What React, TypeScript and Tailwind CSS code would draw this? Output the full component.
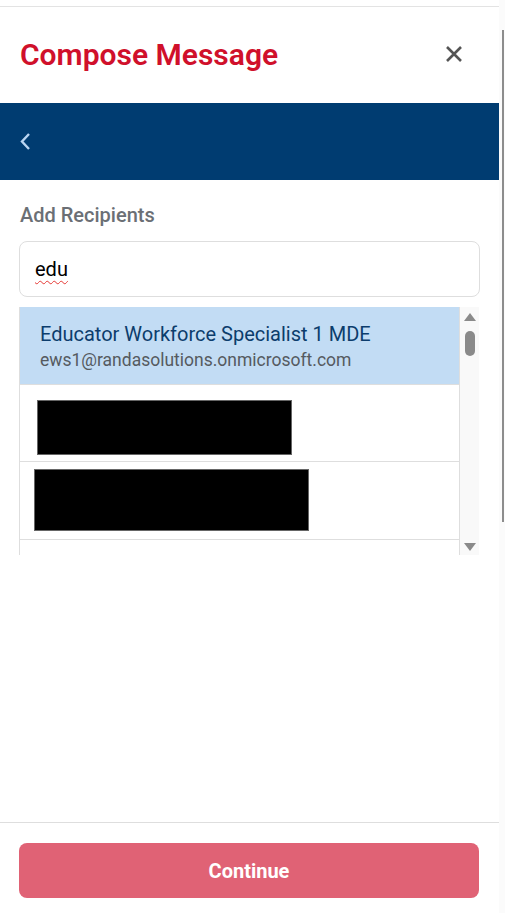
import React from "react";

export default function App() {
  return (
    <div
      className="relative w-[505px] h-[913px] overflow-hidden bg-white flex"
      style={{ fontFamily: "Roboto, 'Liberation Sans', sans-serif" }}
    >
      <div className="w-[499px] h-full flex flex-col">
        <div className="h-[6px]" />
        <div className="border-t border-[#e3e3e3] h-[97px] flex items-center justify-between pl-[20px] pr-[36px]">
          <h1 className="text-[30px] font-semibold text-[#d0102b] leading-none">Compose Message</h1>
          <svg width="18" height="18" viewBox="0 0 18 18" className="-mt-[2px]">
            <path d="M2 2 L16 16 M16 2 L2 16" stroke="#555" strokeWidth="2.6" strokeLinecap="butt" />
          </svg>
        </div>
        <div className="h-[77px] bg-[#003c71] flex items-center pl-[19px]">
          <svg width="12" height="19" viewBox="0 0 12 19">
            <path d="M10 2 L3 9.5 L10 17" stroke="#b9d5f2" strokeWidth="2.4" fill="none" />
          </svg>
        </div>
        <div className="px-[19px] pt-[22px] flex flex-col">
          <div className="text-[20px] font-medium text-[#6b6f75] leading-[26px] pl-[1px]">Add Recipients</div>
          <div className="mt-[13px] h-[56px] border border-[#dedede] rounded-[8px] flex items-center pl-[15px]">
            <span className="text-[20px] text-black leading-none underline decoration-wavy decoration-[#e53935] decoration-[1px] underline-offset-[4px]">edu</span>
          </div>
          <div className="mt-[10px] h-[248px] flex w-[460px] overflow-hidden">
            <div className="w-[441px] flex flex-col border-l border-r border-[#dedede]">
              <div className="h-[78px] shrink-0 bg-[#c2dcf4] border-b border-[#dedede] flex flex-col justify-center pl-[20px]">
                <div className="text-[20px] text-[#0c3d6c] leading-[26px]">Educator Workforce Specialist 1 MDE</div>
                <div className="text-[17.5px] text-[#555a60] leading-[22px] mt-[2px]">ews1@randasolutions.onmicrosoft.com</div>
              </div>
              <div className="h-[77px] shrink-0 border-b border-[#dedede] flex items-start pt-[15px] pl-[17px]">
                <div className="w-[255px] h-[55px] bg-black border border-[#666]" />
              </div>
              <div className="h-[78px] shrink-0 border-b border-[#dedede] flex items-start pt-[7px] pl-[14px]">
                <div className="w-[275px] h-[62px] bg-black border border-[#666]" />
              </div>
              <div className="h-[40px] shrink-0" />
            </div>
            <div className="w-[19px] bg-[#f9f9f9] flex flex-col items-center pt-[6px]">
              <svg width="12" height="8" viewBox="0 0 12 8">
                <path d="M6 0 L12 8 L0 8 Z" fill="#8a8a8a" />
              </svg>
              <div className="mt-[10px] w-[10px] h-[25px] rounded-full bg-[#8a8a8a]" />
              <div className="flex-1" />
              <svg width="12" height="8" viewBox="0 0 12 8" className="mb-[4px]">
                <path d="M0 0 L12 0 L6 8 Z" fill="#8a8a8a" />
              </svg>
            </div>
          </div>
        </div>
        <div className="flex-1" />
        <div className="border-t border-[#dedede] h-[91px] px-[19px] pt-[20px]">
          <button className="w-[460px] h-[55px] rounded-[8px] bg-[#e06275] text-white text-[20px] font-bold">
            Continue
          </button>
        </div>
      </div>
      <div className="w-[6px] h-full bg-[#fbfbfb] relative">
        <div className="absolute left-[3px] top-[30px] w-[2px] h-[492px] bg-[#8d8d8d]" />
      </div>
    </div>
  );
}
